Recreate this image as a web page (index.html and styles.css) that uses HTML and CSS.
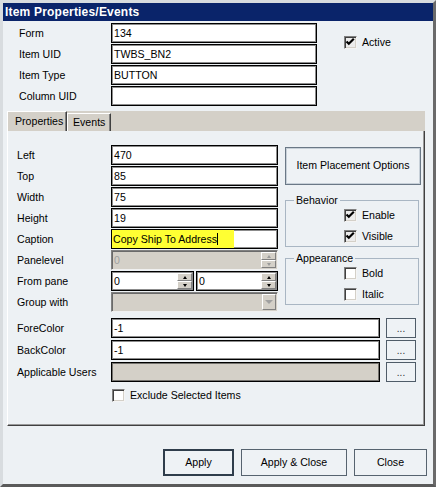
FILE: index.html
```html
<!DOCTYPE html>
<html>
<head>
<meta charset="utf-8">
<link rel="stylesheet" href="styles.css">
</head>
<body>
<div class="window">
  <div class="titlebar">Item Properties/Events</div>
  <div class="top">
    <div class="fields">
      <div class="lbl">Form</div><div class="input">134</div>
      <div class="lbl">Item UID</div><div class="input">TWBS_BN2</div>
      <div class="lbl">Item Type</div><div class="input">BUTTON</div>
      <div class="lbl">Column UID</div><div class="input"></div>
    </div>
    <div class="check-item active-check">
      <span class="cb on"><svg width="11" height="11" viewBox="0 0 11 11"><polyline points="1.5,4.5 3.8,6.8 8.8,1.8" fill="none" stroke="#000" stroke-width="2.2"/></svg></span>
      <span>Active</span>
    </div>
  </div>

  <div class="tabs">
    <div class="tabstrip">
      <div class="tab sel">Properties</div>
      <div class="tab ev">Events</div>
    </div>
    <div class="panel">
      <div class="props">
        <div class="lbl">Left</div><div class="input">470</div>
        <div class="lbl">Top</div><div class="input">85</div>
        <div class="lbl">Width</div><div class="input">75</div>
        <div class="lbl">Height</div><div class="input">19</div>
        <div class="lbl">Caption</div><div class="input caption"><span class="hl"><span class="caret">Copy Ship To Address</span></span></div>
        <div class="lbl">Panelevel</div>
        <div class="input disabled spinbox"><span class="val dim">0</span><span class="spin dis"><span class="sb up"></span><span class="sb down"></span></span></div>
        <div class="lbl">From pane</div>
        <div class="pair">
          <div class="input spinbox"><span class="val">0</span><span class="spin"><span class="sb up"></span><span class="sb down"></span></span></div>
          <div class="input spinbox"><span class="val">0</span><span class="spin"><span class="sb up"></span><span class="sb down"></span></span></div>
        </div>
        <div class="lbl">Group with</div>
        <div class="input disabled combo"><span class="val"></span><span class="drop"></span></div>
      </div>

      <div class="side">
        <div class="btn place">Item Placement Options</div>
        <fieldset class="group">
          <legend>Behavior</legend>
          <div class="check-item"><span class="cb on"><svg width="11" height="11" viewBox="0 0 11 11"><polyline points="1.5,4.5 3.8,6.8 8.8,1.8" fill="none" stroke="#000" stroke-width="2.2"/></svg></span><span>Enable</span></div>
          <div class="check-item"><span class="cb on"><svg width="11" height="11" viewBox="0 0 11 11"><polyline points="1.5,4.5 3.8,6.8 8.8,1.8" fill="none" stroke="#000" stroke-width="2.2"/></svg></span><span>Visible</span></div>
        </fieldset>
        <fieldset class="group">
          <legend>Appearance</legend>
          <div class="check-item"><span class="cb"></span><span>Bold</span></div>
          <div class="check-item"><span class="cb"></span><span>Italic</span></div>
        </fieldset>
      </div>

      <div class="wide">
        <div class="wrow"><div class="lbl">ForeColor</div><div class="input long">-1</div><div class="btn dots">...</div></div>
        <div class="wrow"><div class="lbl">BackColor</div><div class="input long">-1</div><div class="btn dots">...</div></div>
        <div class="wrow"><div class="lbl">Applicable Users</div><div class="input long gray"></div><div class="btn dots">...</div></div>
        <div class="check-item exclude"><span class="cb"></span><span>Exclude Selected Items</span></div>
      </div>
    </div>
  </div>

  <div class="footer">
    <div class="btn fbtn apply">Apply</div>
    <div class="btn fbtn applyclose">Apply &amp; Close</div>
    <div class="btn fbtn close">Close</div>
  </div>
</div>
</body>
</html>
```

FILE: styles.css
```css
* { box-sizing: border-box; }

body {
  margin: 0;
  font-family: "Liberation Sans", Arial, sans-serif;
  font-size: 10.6px;
  color: #000;
  background: #edf1f4;
}

.window {
  width: 436px;
  height: 487px;
  background: #edf1f4;
  border-style: solid;
  border-width: 3px;
  border-color: #d8dcdf #6a6a6a #5a5a5a #d8dcdf;
  display: flex;
  flex-direction: column;
  overflow: hidden;
}

.titlebar {
  height: 18px;
  flex: none;
  background: #0a246a;
  color: #fff;
  font-weight: bold;
  font-size: 12px;
  letter-spacing: 0.2px;
  line-height: 18px;
  padding-left: 2px;
}

/* ---------- top fields ---------- */
.top {
  display: flex;
  align-items: flex-start;
  padding: 2px 0 0 16px;
  height: 85px;
  flex: none;
}

.fields {
  display: grid;
  grid-template-columns: 92px 206px;
  grid-auto-rows: 20px;
  row-gap: 1px;
}

.lbl {
  line-height: 20px;
  white-space: nowrap;
}

.input {
  height: 20px;
  background: #fff;
  border: 1px solid #000;
  box-shadow: inset 0 0 0 1px rgba(0, 0, 0, 0.45);
  padding-left: 2px;
  line-height: 18px;
  white-space: nowrap;
  overflow: hidden;
}

.active-check {
  margin-left: 27px;
  margin-top: 13px;
}

/* ---------- check boxes ---------- */
.check-item {
  display: flex;
  align-items: center;
  gap: 5px;
  height: 13px;
  line-height: 13px;
}

.cb {
  width: 13px;
  height: 13px;
  flex: none;
  background: #fff;
  border: 1px solid;
  border-color: #808080 #f4f4f4 #f4f4f4 #808080;
  box-shadow: inset 1px 1px 0 #404040, inset -1px -1px 0 #d4d0c8;
  display: flex;
  align-items: center;
  justify-content: center;
}

.cb svg { display: block; }
.cb.on { background: #ececec; }

/* ---------- tabs ---------- */
.tabs {
  margin: 5px 8px 0 4px;
  flex: none;
}

.tabstrip {
  height: 20px;
  background: #d4d0c8;
  display: flex;
  align-items: flex-end;
}

.tab {
  height: 18px;
  border-top: 1px solid #fff;
  border-left: 1px solid #fff;
  border-right: 1px solid #404040;
  box-shadow: inset -1px 0 0 #808080;
  line-height: 17px;
  white-space: nowrap;
}

.tab.sel {
  height: 20px;
  width: 60px;
  padding-left: 7px;
  line-height: 19px;
}

.tab.ev {
  width: 44px;
  padding-left: 5px;
}

.panel {
  height: 295px;
  background: #edf1f4;
  border-left: 1px solid #fff;
  border-right: 1px solid #404040;
  border-bottom: 1px solid #404040;
  box-shadow: inset -1px -1px 0 #9a9a9a;
  padding: 14px 0 0 9px;
  display: grid;
  grid-template-columns: 261px 136px;
  grid-template-rows: auto auto;
  align-content: start;
  column-gap: 7px;
  align-items: start;
}

.props {
  display: grid;
  grid-template-columns: 94px 167px;
  grid-auto-rows: 20px;
  row-gap: 1px;
}

.caption { padding-left: 0; }
.hl {
  display: inline-block;
  background: #ffff33;
  width: 122px;
  height: 18px;
  padding-left: 1px;
}
.caret {
  border-right: 1px solid #000;
}

.disabled {
  background: #d4d0c8;
  border-color: #808080 #f0f0f0 #f0f0f0 #808080;
  box-shadow: inset 1px 1px 0 #6a6a6a;
}

.dim { color: #a0a0a0; }

.spinbox, .combo {
  display: flex;
  align-items: stretch;
  padding-right: 1px;
}

.val { flex: 1; }

.spin {
  width: 15px;
  display: flex;
  flex-direction: column;
  padding: 1px 0;
}

.sb {
  flex: 1;
  background: #d4d0c8;
  border: 1px solid;
  border-color: #fff #808080 #808080 #fff;
  display: flex;
  align-items: center;
  justify-content: center;
}

.sb::after {
  content: "";
  border-left: 2.5px solid transparent;
  border-right: 2.5px solid transparent;
}
.sb.up::after { border-bottom: 3px solid #000; }
.sb.down::after { border-top: 3px solid #000; }
.spin.dis .sb.up::after { border-bottom-color: #9a9a9a; }
.spin.dis .sb.down::after { border-top-color: #9a9a9a; }

.pair {
  display: grid;
  grid-template-columns: 83px 82px;
  column-gap: 2px;
}

.drop {
  width: 14px;
  margin: 1px 0;
  background: #d4d0c8;
  border: 1px solid;
  border-color: #fff #808080 #808080 #fff;
  display: flex;
  align-items: center;
  justify-content: center;
}
.drop::after {
  content: "";
  border-left: 4px solid transparent;
  border-right: 4px solid transparent;
  border-top: 4px solid #a0a0a0;
}

/* ---------- right side ---------- */
.side {
  display: flex;
  flex-direction: column;
}

.btn {
  background: #eef2f5;
  border: 1px solid #56636f;
  text-align: center;
  white-space: nowrap;
}

.place {
  margin-top: 2px;
  height: 38px;
  line-height: 35px;
  border-color: #6a7886;
  box-shadow: inset 0 0 0 1px #c7d0d8;
}

.group {
  width: 134px;
  margin: 9px 0 0 0;
  padding: 3px 0 3px 0;
  border: 1px solid #a9b6c3;
  display: flex;
  flex-direction: column;
  gap: 8px;
  min-width: 0;
}

.group + .group { margin-top: 5px; }

.group legend {
  margin-left: 8px;
  padding: 0 2px;
  line-height: 12px;
  font-size: 10.6px;
}

.group .check-item { margin-left: 58px; }

/* ---------- wide rows ---------- */
.wide {
  grid-column: 1 / span 2;
  margin-top: 6px;
  display: flex;
  flex-direction: column;
  gap: 2px;
}

.wrow {
  display: flex;
  height: 20px;
}

.wrow .lbl { width: 94px; }

.long { width: 269px; }

.gray {
  background: #d4d0c8;
}

.dots {
  width: 30px;
  height: 20px;
  margin-left: 6px;
  line-height: 20px;
  font-size: 10px;
  color: #333;
  border-color: #4f5c68;
}

.exclude {
  margin: 5px 0 0 95px;
}

/* ---------- footer ---------- */
.footer {
  flex: 1;
  display: flex;
  justify-content: flex-end;
  align-items: flex-start;
  gap: 7px;
  padding: 23px 6px 0 0;
}

.fbtn {
  height: 27px;
  line-height: 25px;
}

.apply {
  width: 71px;
  border: 2px solid #2f3d4b;
  line-height: 23px;
}

.applyclose { width: 106px; }
.close { width: 73px; }
```
